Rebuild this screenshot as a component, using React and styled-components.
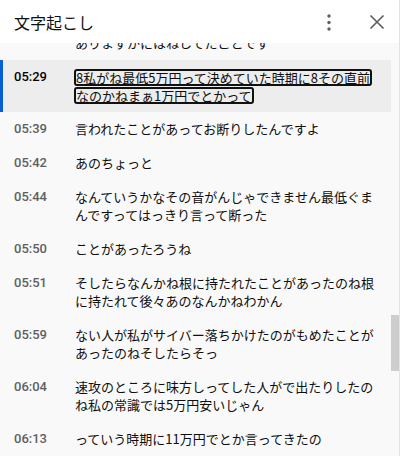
import { useLayoutEffect, useRef } from 'react';
import styled, { createGlobalStyle } from 'styled-components';

const Global = createGlobalStyle`
  html, body { margin: 0; padding: 0; background: #fff; }
  * { box-sizing: border-box; }
`;

const segments = [
  { t: '05:24', lines: ['あっちの方がねそれでいいって言ってくれて', 'ありますかにはねしてたことです'] },
  { t: '05:29', active: true, lines: ['8私がね最低5万円って決めていた時期に8その直前', 'なのかねまぁ1万円でとかって'] },
  { t: '05:39', lines: ['言われたことがあってお断りしたんですよ'] },
  { t: '05:42', lines: ['あのちょっと'] },
  { t: '05:44', lines: ['なんていうかなその音がんじゃできません最低ぐま', 'んですってはっきり言って断った'] },
  { t: '05:50', lines: ['ことがあったろうね'] },
  { t: '05:51', lines: ['そしたらなんかね根に持たれたことがあったのね根', 'に持たれて後々あのなんかねわかん'] },
  { t: '05:59', lines: ['ない人が私がサイバー落ちかけたのがもめたことが', 'あったのねそしたらそっ'] },
  { t: '06:04', lines: ['速攻のところに味方しってした人がで出たりしたの', 'ね私の常識では5万円安いじゃん'] },
  { t: '06:13', lines: ['っていう時期に11万円でとか言ってきたの'] },
];

const Panel = styled.div`
  width: 400px; height: 456px;
  display: flex; flex-direction: column;
  background: #f9f9f9;
  border-right: 1px solid #e3e3e3;
`;

const Header = styled.div`
  height: 43px; flex: none;
  display: flex; align-items: center;
  padding: 0 4px 0 14px;
  background: #fff;
  position: relative; z-index: 1;
`;

const Title = styled.h2`
  flex: 1; margin: 0;
  font-family: "Noto Sans CJK JP", sans-serif;
  font-size: 16px; font-weight: 400; color: #0f0f0f;
  line-height: 22px;
`;

const IconBtn = styled.button`
  width: 36px; height: 36px; padding: 0;
  display: flex; align-items: center; justify-content: center;
  background: none; border: none; cursor: pointer;
  & + & { margin-left: 12px; }
`;

const Body = styled.div`
  flex: 1; min-height: 0;
  display: flex;
`;

const List = styled.div`
  flex: 1; overflow: hidden;
`;

const Row = styled.div`
  display: grid; grid-template-columns: 61px 1fr;
  padding: 8px 0 8px 11px;
  border-left: 3px solid ${({ $a }) => ($a ? '#065fd4' : 'transparent')};
  background: ${({ $a }) => ($a ? '#ededed' : 'transparent')};
`;

const Stamp = styled.div`
  font-family: Roboto, "Liberation Sans", sans-serif;
  font-size: 13px; font-weight: 500; line-height: 18px;
  color: ${({ $a }) => ($a ? '#030303' : '#606060')};
`;

const Text = styled.div`
  font-family: "Noto Sans CJK JP", sans-serif;
  font-size: 13px; line-height: 18px; color: #0f0f0f;
`;

const Line = styled.div`
  height: 18px; white-space: nowrap;
  display: flex; align-items: center;
`;

const Boxed = styled.span`
  display: inline-block;
  line-height: 13px;
  border: 2px solid #111;
  border-radius: 3px;
  margin-left: -1px;
`;

const Track = styled.div`
  width: 8px; flex: none;
  display: flex; flex-direction: column;
`;

const Thumb = styled.div`
  margin-top: 272px; height: 56px;
  background: #cdcdcd;
`;

const Kebab = () => (
  <svg width="24" height="24" viewBox="0 0 24 24">
    <circle cx="12" cy="6" r="1.7" fill="#606060" />
    <circle cx="12" cy="12.5" r="1.7" fill="#606060" />
    <circle cx="12" cy="19" r="1.7" fill="#606060" />
  </svg>
);

const Close = () => (
  <svg width="24" height="24" viewBox="0 0 24 24">
    <path d="M5.5 5.5l13 13M18.5 5.5l-13 13" stroke="#606060" strokeWidth="1.7" fill="none" />
  </svg>
);

export default function App() {
  const listRef = useRef(null);

  // the transcript is scrolled so that the active cue sits just under the header
  useLayoutEffect(() => {
    if (listRef.current) listRef.current.scrollTop = 36;
  }, []);

  return (
    <>
      <Global />
      <Panel>
        <Header>
          <Title>文字起こし</Title>
          <IconBtn aria-label="その他"><Kebab /></IconBtn>
          <IconBtn aria-label="閉じる"><Close /></IconBtn>
        </Header>
        <Body>
          <List ref={listRef}>
            {segments.map((s) => (
              <Row key={s.t} $a={s.active}>
                <Stamp $a={s.active}>{s.t}</Stamp>
                <Text>
                  {s.lines.map((l, i) => (
                    <Line key={i}>{s.active ? <Boxed>{l}</Boxed> : l}</Line>
                  ))}
                </Text>
              </Row>
            ))}
          </List>
          <Track><Thumb /></Track>
        </Body>
      </Panel>
    </>
  );
}
